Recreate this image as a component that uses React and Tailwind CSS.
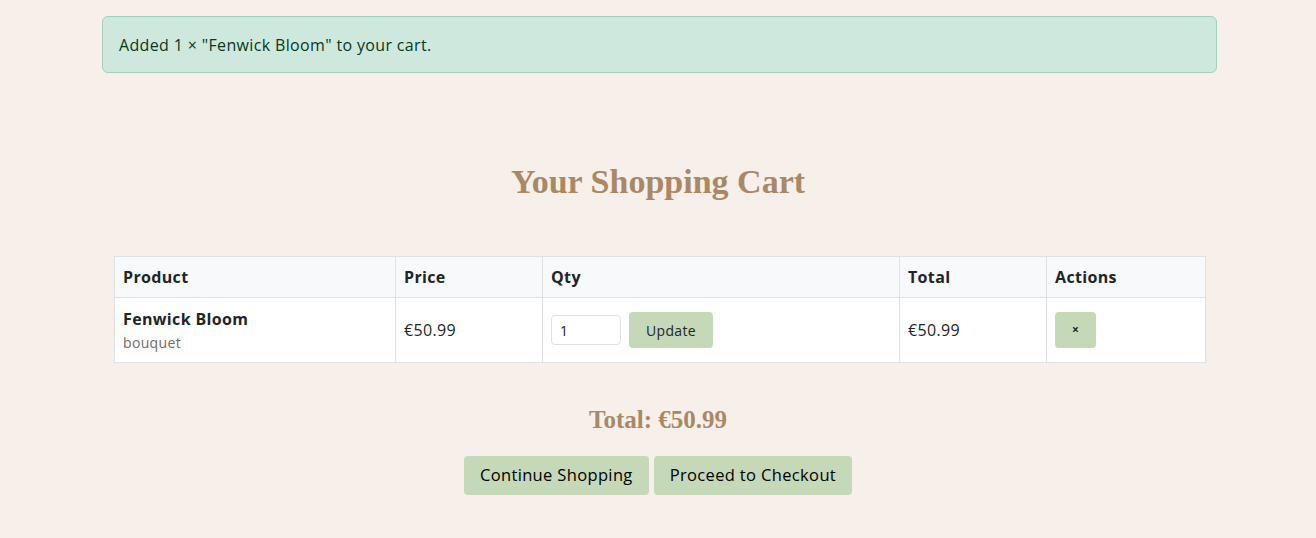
export default function App() {
  const sans = { fontFamily: '"Open Sans", "DejaVu Sans", sans-serif' };
  const serif = { fontFamily: '"Liberation Serif", "DejaVu Serif", serif' };

  return (
    <div className="min-h-screen bg-[#f7f0ea] tracking-[0.35px] text-[#212529]" style={sans}>
      <div className="mx-auto w-[1116px] pt-4">
        {/* Alert */}
        <div className="ml-[2px] flex h-[57px] w-[1115px] items-center rounded-md border border-[#a3cfbb] bg-[#cfe8dd] px-4 text-[16px] text-[#0a3622]">
          Added 1 × "Fenwick Bloom" to your cart.
        </div>

        <h1
          className="mt-[83px] text-center text-[34px] font-bold tracking-normal text-[#a98866]"
          style={serif}
        >
          Your Shopping Cart
        </h1>

        {/* Cart table */}
        <div className="mx-[14px] mt-[49px]">
          <table className="w-[1091px] table-fixed border-collapse bg-white text-[16px]">
            <colgroup>
              <col className="w-[281px]" />
              <col className="w-[147px]" />
              <col className="w-[357px]" />
              <col className="w-[147px]" />
              <col className="w-[159px]" />
            </colgroup>
            <thead>
              <tr className="h-[41px] bg-[#f8f9fa] text-left">
                <th className="border border-[#dee2e6] px-2 font-bold">Product</th>
                <th className="border border-[#dee2e6] px-2 font-bold">Price</th>
                <th className="border border-[#dee2e6] px-2 font-bold">Qty</th>
                <th className="border border-[#dee2e6] px-2 font-bold">Total</th>
                <th className="border border-[#dee2e6] px-2 font-bold">Actions</th>
              </tr>
            </thead>
            <tbody>
              <tr className="h-[65px]">
                <td className="border border-[#dee2e6] px-2 align-middle">
                  <div className="font-bold leading-[22px]">Fenwick Bloom</div>
                  <div className="mt-[3px] text-[14px] leading-[20px] text-[#6c6c6c]">bouquet</div>
                </td>
                <td className="border border-[#dee2e6] px-2 align-middle">€50.99</td>
                <td className="border border-[#dee2e6] px-2 align-middle">
                  <div className="flex items-center gap-2">
                    <input
                      defaultValue="1"
                      className="h-[30px] w-[70px] rounded border border-[#dee2e6] bg-white px-2 text-[14px] outline-none"
                    />
                    <button className="h-[36px] w-[84px] rounded bg-[#c5d8b8] text-[14px]">
                      Update
                    </button>
                  </div>
                </td>
                <td className="border border-[#dee2e6] px-2 align-middle">€50.99</td>
                <td className="border border-[#dee2e6] px-2 align-middle">
                  <button className="h-[36px] w-[41px] rounded bg-[#c5d8b8] text-[12px] font-bold">
                    ×
                  </button>
                </td>
              </tr>
            </tbody>
          </table>
        </div>

        <div
          className="mt-[38px] text-center text-[25px] font-bold tracking-normal text-[#a98866]"
          style={serif}
        >
          Total: €50.99
        </div>

        <div className="mt-[17px] flex justify-center gap-[5px]">
          <button className="h-[39px] rounded bg-[#c5d8b8] px-4 text-[16.5px] text-black">
            Continue Shopping
          </button>
          <button className="h-[39px] rounded bg-[#c5d8b8] px-4 text-[16.5px] text-black">
            Proceed to Checkout
          </button>
        </div>
      </div>
    </div>
  );
}
